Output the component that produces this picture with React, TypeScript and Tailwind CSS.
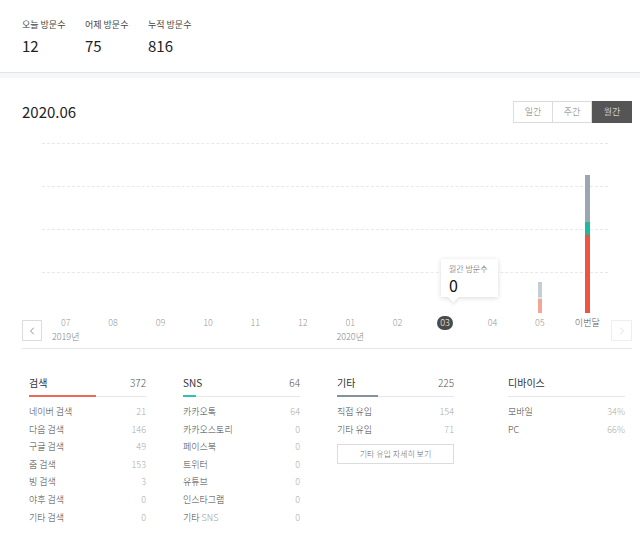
import { ChevronLeft, ChevronRight } from 'lucide-react'

const VISIT = [
  { label: '오늘 방문수', value: '12' },
  { label: '어제 방문수', value: '75' },
  { label: '누적 방문수', value: '816' },
]

const MONTHS = ['07', '08', '09', '10', '11', '12', '01', '02', '03', '04', '05', '이번달']
const YEARS: Record<number, string> = { 0: '2019년', 6: '2020년' }

const SEARCH = [
  ['네이버 검색', '21'], ['다음 검색', '146'], ['구글 검색', '49'], ['줌 검색', '153'],
  ['빙 검색', '3'], ['야후 검색', '0'], ['기타 검색', '0'],
]
const SNS = [
  ['카카오톡', '64'], ['카카오스토리', '0'], ['페이스북', '0'], ['트위터', '0'],
  ['유튜브', '0'], ['인스타그램', '0'], ['기타 SNS', '0'],
]
const ETC = [['직접 유입', '154'], ['기타 유입', '71']]
const DEVICE = [['모바일', '34%'], ['PC', '66%']]

function StatHead({ title, total, bar }: { title: string; total?: string; bar?: React.ReactNode }) {
  return (
    <>
      <div className="flex items-center justify-between text-[10px] leading-[13px] text-[#333]">
        <span>{title}</span>
        {total && <span className="text-[#555] font-light">{total}</span>}
      </div>
      <div className="mt-[6px] h-[2px] border-b border-[#e6e6e6] flex">{bar}</div>
    </>
  )
}

function Rows({ rows }: { rows: string[][] }) {
  return (
    <div className="mt-[6px] font-light">
      {rows.map(([k, v]) => (
        <div key={k} className="flex justify-between text-[9px] leading-[17.6px]">
          <span className="text-[#444]">
            {k === '기타 SNS' ? <>기타 <span className="text-[#999]">SNS</span></> : k}
          </span>
          <span className="text-[#aaa]">{v}</span>
        </div>
      ))}
    </div>
  )
}

export default function App() {
  return (
    <div className="w-[640px] h-[540px] overflow-hidden bg-white" style={{ fontFamily: '"Noto Sans CJK KR", "Noto Sans", sans-serif' }}>
      {/* visitors */}
      <div className="flex pl-[22px] pt-[18px]">
        {VISIT.map(v => (
          <div key={v.label} className="w-[63px]">
            <p className="text-[9px] leading-[13px] text-[#444]">{v.label}</p>
            <p className="mt-[5px] text-[15px] leading-[20px] text-[#222]">{v.value}</p>
          </div>
        ))}
      </div>
      <div className="mt-[16px] h-[6px] border-t border-[#e3e5e8] bg-[#f6f7f9]" />

      {/* chart */}
      <div className="pl-[22px] pr-[8px]">
        <div className="mt-[23px] flex items-center justify-between h-[22px]">
          <h2 className="text-[15px] text-[#222]">2020.06</h2>
          <div className="flex text-[9px] font-light">
            <button className="w-[40px] h-[22px] border border-[#dcdcdc] text-[#777]">일간</button>
            <button className="w-[39px] h-[22px] border border-l-0 border-[#dcdcdc] text-[#777]">주간</button>
            <button className="w-[40px] h-[22px] bg-[#555] text-white">월간</button>
          </div>
        </div>

        <div className="relative ml-[20px] mr-[21px] h-[190px]">
          <div className="flex flex-col gap-[42px] pt-[20px] pr-[3px]">
            {[0, 1, 2, 3].map(i => <div key={i} className="border-t border-dashed border-[#e8e8e8]" />)}
          </div>
          <div className="absolute inset-0 grid grid-cols-12 items-end">
            {MONTHS.map((m, i) => (
              <div key={m} className="flex justify-center">
                {i === 10 && (
                  <div className="flex flex-col w-[4px]">
                    <div className="h-[15px] bg-[#c5ccd2]" />
                    <div className="h-[2px] bg-[#cdece6]" />
                    <div className="h-[14px] bg-[#f3a597]" />
                  </div>
                )}
                {i === 11 && (
                  <div className="flex flex-col w-[5px]">
                    <div className="h-[47px] bg-[#9ba6ae]" />
                    <div className="h-[13px] bg-[#1fb99e]" />
                    <div className="h-[78px] bg-[#f0533f]" />
                  </div>
                )}
              </div>
            ))}
          </div>
          <div className="absolute left-[399px] top-[136px] w-[57px] h-[38px] bg-white shadow-[0_1px_5px_rgba(0,0,0,0.15)] px-[8px] pt-[4px]">
            <p className="text-[8px] leading-[12px] text-[#555] font-light">월간 방문수</p>
            <p className="text-[16px] leading-[20px] text-[#111]">0</p>
            <div className="absolute left-[9px] -bottom-[4px] w-[7px] h-[7px] rotate-45 bg-white shadow-[2px_2px_3px_rgba(0,0,0,0.08)]" />
          </div>
        </div>

        <div className="flex h-[36px] border-b border-[#e6e6e6]">
          <button className="mt-[7px] w-[20px] h-[21px] border border-[#dcdcdc] flex items-center justify-center text-[#444]">
            <ChevronLeft size={12} strokeWidth={1.2} />
          </button>
          <div className="flex-1 grid grid-cols-12 pt-[3px] font-light">
            {MONTHS.map((m, i) => (
              <div key={m} className="flex flex-col items-center text-[9px] leading-[14px]">
                {m === '03' ? (
                  <span className="rounded-full bg-[#4a4a4a] text-white px-[3px]">{m}</span>
                ) : (
                  <span className={m === '이번달' ? 'text-[#555]' : 'text-[#999]'}>{m}</span>
                )}
                {YEARS[i] && <span className="text-[#888]">{YEARS[i]}</span>}
              </div>
            ))}
          </div>
          <button className="mt-[7px] w-[21px] h-[21px] border border-[#eee] flex items-center justify-center text-[#ccc]">
            <ChevronRight size={12} strokeWidth={1.2} />
          </button>
        </div>
      </div>

      {/* stats */}
      <div className="flex pt-[27px]">
        <div className="ml-[29px] w-[117px]">
          <StatHead title="검색" total="372" bar={<div className="w-[67px] h-[2px] bg-[#ec6a55]" />} />
          <Rows rows={SEARCH} />
        </div>
        <div className="ml-[37px] w-[117px]">
          <StatHead title="SNS" total="64" bar={<div className="w-[13px] h-[2px] bg-[#2cc2b4]" />} />
          <Rows rows={SNS} />
        </div>
        <div className="ml-[37px] w-[117px]">
          <StatHead title="기타" total="225" bar={<div className="w-[41px] h-[2px] bg-[#8593a0]" />} />
          <Rows rows={ETC} />
          <button className="mt-[5px] w-full h-[20px] border border-[#dcdcdc] text-[8px] text-[#666] font-light">기타 유입 자세히 보기</button>
        </div>
        <div className="ml-[54px] w-[117px]">
          <StatHead title="디바이스" />
          <Rows rows={DEVICE} />
        </div>
      </div>
    </div>
  )
}
